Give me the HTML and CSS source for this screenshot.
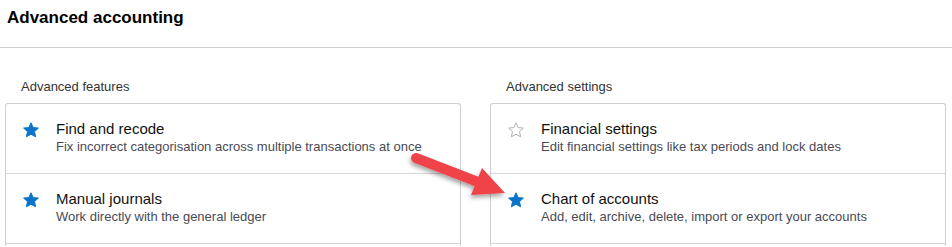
FILE: index.html
```html
<!DOCTYPE html>
<html lang="en">
<head>
  <meta charset="UTF-8" />
  <title>Advanced accounting</title>
  <link rel="stylesheet" href="styles.css">
</head>
<body>
  <header class="page-head">
    <h1>Advanced accounting</h1>
  </header>

  <main class="columns">
    <section class="group">
      <h2 class="group-label">Advanced features</h2>
      <div class="card">
        <div class="row">
          <svg class="star fav" viewBox="0 0 16 16"><polygon points="8,0.8 10.2,5.6 15.4,6.1 11.5,9.6 12.6,14.8 8,12.2 3.4,14.8 4.5,9.6 0.6,6.1 5.8,5.6"/></svg>
          <div class="row-text">
            <div class="row-title">Find and recode</div>
            <div class="row-desc">Fix incorrect categorisation across multiple transactions at once</div>
          </div>
        </div>
        <div class="row">
          <svg class="star fav" viewBox="0 0 16 16"><polygon points="8,0.8 10.2,5.6 15.4,6.1 11.5,9.6 12.6,14.8 8,12.2 3.4,14.8 4.5,9.6 0.6,6.1 5.8,5.6"/></svg>
          <div class="row-text">
            <div class="row-title">Manual journals</div>
            <div class="row-desc">Work directly with the general ledger</div>
          </div>
        </div>
        <div class="row empty"></div>
      </div>
    </section>

    <section class="group">
      <h2 class="group-label">Advanced settings</h2>
      <div class="card">
        <div class="row">
          <svg class="star" viewBox="0 0 16 16"><polygon points="8,0.8 10.2,5.6 15.4,6.1 11.5,9.6 12.6,14.8 8,12.2 3.4,14.8 4.5,9.6 0.6,6.1 5.8,5.6"/></svg>
          <div class="row-text">
            <div class="row-title">Financial settings</div>
            <div class="row-desc">Edit financial settings like tax periods and lock dates</div>
          </div>
        </div>
        <div class="row">
          <svg class="star fav" viewBox="0 0 16 16"><polygon points="8,0.8 10.2,5.6 15.4,6.1 11.5,9.6 12.6,14.8 8,12.2 3.4,14.8 4.5,9.6 0.6,6.1 5.8,5.6"/></svg>
          <div class="row-text">
            <div class="row-title">Chart of accounts</div>
            <div class="row-desc">Add, edit, archive, delete, import or export your accounts</div>
          </div>
        </div>
        <div class="row empty"></div>
      </div>
    </section>
  </main>

  <!-- annotation arrow laid over the cards -->
  <svg class="arrow" viewBox="400 140 120 80" width="120" height="80">
    <defs>
      <filter id="shade" x="-20%" y="-20%" width="140%" height="150%">
        <feDropShadow dx="-1" dy="3" stdDeviation="2" flood-color="#000" flood-opacity="0.35"/>
      </filter>
    </defs>
    <g filter="url(#shade)" fill="#f0434a">
      <line x1="416" y1="158" x2="478" y2="182" stroke="#f0434a" stroke-width="10" stroke-linecap="round"/>
      <polygon points="482,168 471,195 505,193"/>
    </g>
  </svg>
</body>
</html>
```

FILE: styles.css
```css
html {
  overflow: hidden;
}
body {
  margin: 0;
  font-family: 'Liberation Sans', Arial, sans-serif;
  color: #222;
  background: #fff;
  position: relative;
}
.page-head {
  border-bottom: 1px solid #d0d0d0;
  height: 47px;
  padding: 0 7px;
}
.page-head h1 {
  margin: 0;
  padding-top: 8px;
  font-size: 17px;
  line-height: 20px;
  font-weight: bold;
  color: #000;
}
.columns {
  display: grid;
  grid-template-columns: 1fr 1fr;
  gap: 29px;
  padding: 30px 6px 0 5px;
}
.group-label {
  margin: 0 0 7px 16px;
  font-size: 13px;
  line-height: 18px;
  font-weight: normal;
  color: #333;
}
.card {
  border: 1px solid #cfcfcf;
  border-radius: 3px 3px 0 0;
  border-bottom: none;
}
.row {
  display: flex;
  align-items: flex-start;
  gap: 17px;
  height: 69px;
  padding: 0 17px;
  border-bottom: 1px solid #d6d6d6;
}
.row.empty {
  height: 2px;
  border-bottom: none;
}
.star {
  width: 16px;
  height: 16px;
  margin-top: 18px;
  flex: none;
  fill: none;
  stroke: #b0b0b0;
  stroke-width: 1;
}
.star.fav {
  fill: #0a74c8;
  stroke: #0a74c8;
}
.row-text {
  padding-top: 15px;
}
.row-title {
  font-size: 15px;
  line-height: 20px;
  color: #111;
}
.row-desc {
  font-size: 13px;
  line-height: 16px;
  color: #4a4a55;
}
.arrow {
  position: absolute;
  left: 400px;
  top: 140px;
}
```
